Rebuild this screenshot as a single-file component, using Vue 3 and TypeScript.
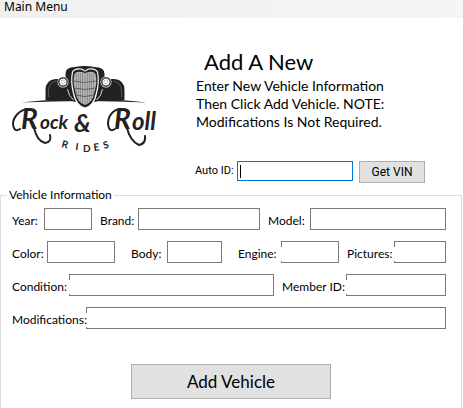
<script setup lang="ts">
import { reactive, ref } from 'vue'

interface Field {
  key: string
  label: string
  tight?: boolean
}

interface Row {
  name: string
  fields: Field[]
}

const rows: Row[] = [
  {
    name: 'identity',
    fields: [
      { key: 'year', label: 'Year:' },
      { key: 'brand', label: 'Brand:' },
      { key: 'model', label: 'Model:' },
    ],
  },
  {
    name: 'details',
    fields: [
      { key: 'color', label: 'Color:' },
      { key: 'body', label: 'Body:' },
      { key: 'engine', label: 'Engine:', tight: true },
      { key: 'pictures', label: 'Pictures:', tight: true },
    ],
  },
  {
    name: 'ownership',
    fields: [
      { key: 'condition', label: 'Condition:', tight: true },
      { key: 'member', label: 'Member ID:', tight: true },
    ],
  },
  {
    name: 'notes',
    fields: [{ key: 'modifications', label: 'Modifications:', tight: true }],
  },
]

const autoId = ref('')
const vehicle = reactive<Record<string, string>>({})
</script>

<template>
  <div class="window">
    <nav class="menubar">
      <button type="button" class="menu-item">Main Menu</button>
    </nav>

    <form @submit.prevent>
      <header class="top">
        <svg class="logo" viewBox="0 0 160 100" role="img" aria-label="Rock &amp; Roll Rides">
          <g transform="translate(7.500 0)">
            <!-- fenders and ground line -->
            <path d="M38 40V30q0-10 10-11h10l8 21z" fill="#242122" />
            <path d="M117 40V30q0-10-10-11H96L88 40z" fill="#242122" />
            <path d="M41 37V30q1-8 8-9M114 37V30q-1-8-8-9" fill="none" stroke="#777" stroke-width=".6" />
            <path d="M14 42.500Q45 39 70 38h14q25 1 55 4.500Q108 41 77 41T14 42.500z" fill="#242122" />
            <!-- hood -->
            <path d="M58 39V14q0-7 9-7 10-2 20 0 10 0 10 7V39l-10 3H68z" fill="#242122" />
            <path d="M60 29q1 7 6 11M95 29q-1 7-6 11" fill="none" stroke="#fff" stroke-width=".8" />
            <!-- grille -->
            <path
              d="M65 12q2-4 9-3l3.500 2 3.500-2q7-1 9 3 2 10-1 21-3 14-11.500 15Q69 47 66 33 63 22 65 12z"
              fill="#242122" stroke="#fff" stroke-width="1.200"
            />
            <path
              d="M67 14q2-3 7-2l3.500 1 3.500-1q5-1 7 2 2 8-1 18-2 11-9.500 13Q70 43 68 32 65 22 67 14z"
              fill="#b4b4b4"
            />
            <path
              d="M69 14v20M71 13v26M73 13v29M75 13v31M77.500 13v32M80 13v31M82 13v29M84 13v26M86 14v20"
              stroke="#777" stroke-width=".6"
            />
            <path d="M66 21q11 3 22 0M66 28q11 3 22 0M68 35q9 3 19 0M77.500 8v5" fill="none" stroke="#444" stroke-width=".7" />
            <!-- headlights -->
            <g fill="#fff" stroke="#242122">
              <circle cx="55.500" cy="22" r="5.500" stroke="none" />
              <circle cx="98.500" cy="22" r="5.500" stroke="none" />
              <circle cx="55.500" cy="22" r="4.200" stroke-width="1.300" />
              <circle cx="98.500" cy="22" r="4.200" stroke-width="1.300" />
              <circle cx="55.500" cy="22" r="2" stroke="#aaa" stroke-width=".7" />
              <circle cx="98.500" cy="22" r="2" stroke="#aaa" stroke-width=".7" />
            </g>
          </g>
          <!-- lettering with its flourishes -->
          <g class="script">
            <text x="21" y="69" font-size="28">R</text>
            <text x="40" y="69" font-size="19">ock</text>
            <text x="74" y="72" font-size="25">&amp;</text>
            <text x="114" y="69" font-size="28">R</text>
            <text x="132" y="70" font-size="24">oll</text>
          </g>
          <g fill="none" stroke="#242122" stroke-width="2" stroke-linecap="round">
            <path d="M29 49C19 49 13 58 13 64q1 9 7 5M34 68q3 13 11 15 7-1 5-8" />
            <path d="M122 49c-10 0-14 8-14 15q1 9 7 5M127 68q3 13 12 17 7-1 6-9" />
          </g>
          <text class="rides" x="61 75 83 94 104" y="87 90 92 91 89" rotate="14 8 0 -8 -14">RIDES</text>
        </svg>

        <div class="intro">
          <h1>Add A New</h1>
          <p>
            Enter New Vehicle Information<br />
            Then Click Add Vehicle. NOTE:<br />
            Modifications Is Not Required.
          </p>
          <div class="lookup">
            <label for="auto-id">Auto ID:</label>
            <input id="auto-id" v-model="autoId" type="text" />
            <button type="button" class="btn">Get VIN</button>
          </div>
        </div>
      </header>

      <fieldset>
        <legend>Vehicle Information</legend>
        <div v-for="row in rows" :key="row.name" class="row" :class="row.name">
          <template v-for="field in row.fields" :key="field.key">
            <label :for="field.key" :class="{ tight: field.tight }">{{ field.label }}</label>
            <input :id="field.key" v-model="vehicle[field.key]" type="text" />
          </template>
        </div>
        <button type="submit" class="btn submit">Add Vehicle</button>
      </fieldset>
    </form>
  </div>
</template>

<style>
body {
  margin: 0;
  background: #fff;
}
</style>

<style scoped>
.window {
  font-family: 'Lato', sans-serif;
  font-size: 12px;
  color: #000;
}

.menubar {
  display: flex;
  align-items: flex-start;
  height: 18px;
  background: linear-gradient(90deg, #f0f0f0, #f5f5f5);
}

.menu-item {
  padding: 0 4px;
  border: 0;
  background: none;
  color: inherit;
  font: 12px/14px 'Noto Sans', sans-serif;
}

.top {
  display: grid;
  grid-template-columns: 160px 1fr;
  column-gap: 35px;
  height: 169px;
}

.logo {
  width: 160px;
  height: 100px;
  margin-top: 42px;
}

.script {
  font-family: 'Lato', sans-serif;
  font-style: italic;
  font-weight: 700;
  fill: #242122;
}

.rides {
  font: 700 10px 'Lato', sans-serif;
  fill: #242122;
}

.intro {
  padding-top: 29px;
}

h1 {
  margin: 0;
  padding-left: 9px;
  font: 22px/30px 'Lato', sans-serif;
}

p {
  margin: 0;
  padding-left: 1px;
  font: 14px/18px 'Lato', sans-serif;
}

.lookup {
  display: flex;
  align-items: flex-start;
  margin-top: 30px;
  font-family: 'Roboto', sans-serif;
}

.lookup label {
  width: 42px;
  font-size: 11px;
  line-height: 20px;
  white-space: nowrap;
}

input {
  box-sizing: border-box;
  width: 100%;
  min-width: 0;
  height: 22px;
  margin: 0;
  padding: 0 3px;
  border: 1px solid #7a7a7a;
  border-radius: 0;
  outline: 0;
  background: #fff;
  font: inherit;
}

.lookup input {
  width: 116px;
  height: 20px;
  margin-right: 6px;
  border-color: #0078d7;
  background: linear-gradient(#000, #000) 2px 3px / 1px 13px no-repeat #fff;
}

.btn {
  box-sizing: border-box;
  height: 22px;
  padding: 0;
  border: 1px solid #adadad;
  border-radius: 0;
  background: #e1e1e1;
  color: #000;
  font: 12px 'Roboto', sans-serif;
}

.lookup .btn {
  width: 66px;
}

fieldset {
  display: flex;
  flex-direction: column;
  gap: 11px;
  min-width: 0;
  margin: 0 1px 0 0;
  padding: 5px 0 9px;
  border: 1px solid #dcdcdc;
  border-bottom: 0;
}

legend {
  margin-left: 6px;
  padding: 0 2px;
  line-height: 16px;
}

.row {
  display: grid;
  align-items: center;
  padding: 0 15px 0 11px;
}

.identity {
  grid-template-columns: 32px 48fr 46px 122fr 50px 136fr;
}

.details {
  grid-template-columns: 35px 68fr 52px 55fr 59px 58fr 55px 52fr;
}

.ownership {
  grid-template-columns: 57px 205fr 72px 100fr;
}

.notes {
  grid-template-columns: 74px 1fr;
}

.row label {
  margin-top: 4px;
  line-height: 14px;
  white-space: nowrap;
}

.row label:not(:first-child) {
  padding-left: 8px;
}

.details label:nth-of-type(2),
.details label:nth-of-type(3) {
  padding-left: 16px;
}

.row .tight {
  position: relative;
  z-index: 1;
  margin-right: -1px;
  background: #fff;
}

.submit {
  align-self: center;
  width: 200px;
  height: 35px;
  margin-top: 24px;
  font: 17px 'Lato', sans-serif;
}
</style>
